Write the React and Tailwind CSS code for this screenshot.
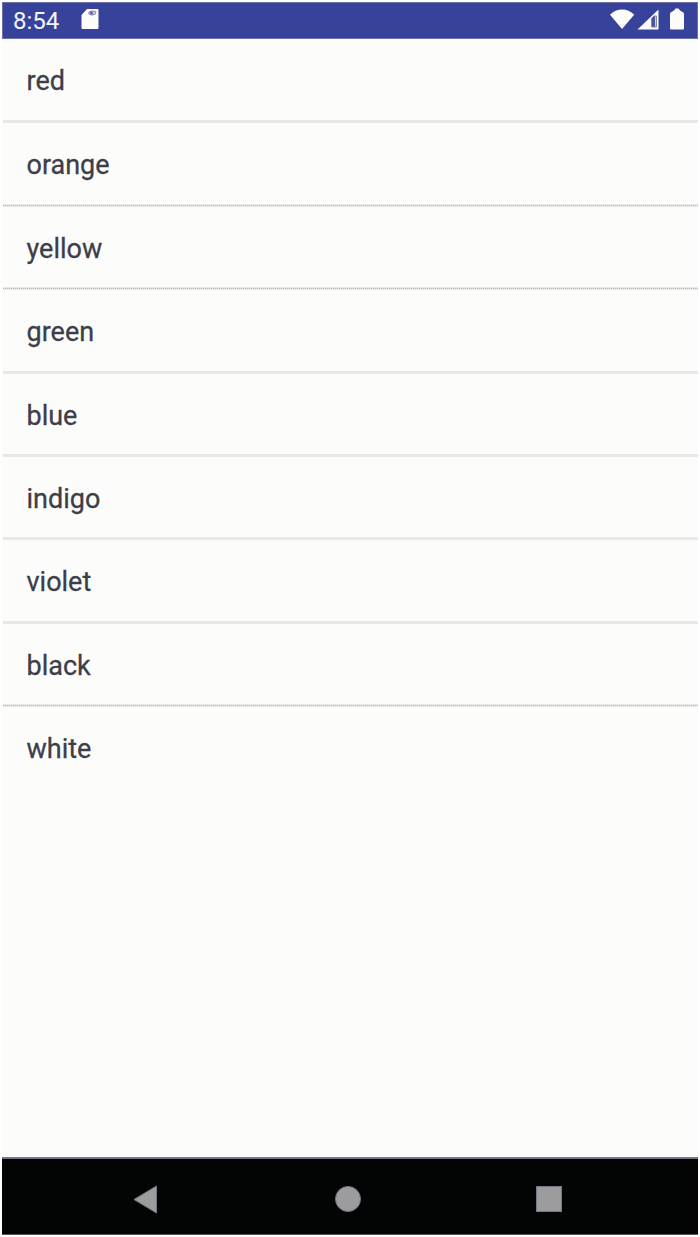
const rows = [
  { name: 'red', size: 'h-[84px]' },
  { name: 'orange', size: 'h-[84px]', dotted: true },
  { name: 'yellow', size: 'h-[83px]', dotted: true },
  { name: 'green', size: 'h-[84px]' },
  { name: 'blue', size: 'h-[83px]' },
  { name: 'indigo', size: 'h-[83px]' },
  { name: 'violet', size: 'h-[84px]' },
  { name: 'black', size: 'h-[83px]', dotted: true },
  { name: 'white', size: 'h-[81px]', last: true },
];

function Divider({ dotted }) {
  return (
    <div className="ml-px flex h-[3px] shrink-0 flex-col justify-center bg-[#e8e8e8]">
      {dotted && (
        <div className="h-px bg-[repeating-linear-gradient(90deg,#b8b8c0_0px,#b8b8c0_1px,#e4e4e6_1px,#e4e4e6_2px)]" />
      )}
    </div>
  );
}

function StatusBar() {
  return (
    <header className="flex h-[37px] shrink-0 items-center border border-[#6c70a4] bg-[#37439a] pb-[4px] pl-[10px] pr-[13px] text-white">
      <span className="w-[68px] pt-[4px] text-[24px] leading-none text-[#f4f4fa]">8:54</span>
      <svg className="h-[22px] w-[18px]" viewBox="0 0 18 22" aria-hidden="true">
        <path d="M6 1h10.500q1 0 1 1v17.500q0 1.500-1 1.500H1.500q-1 0-1-1.500V7z" fill="#fcfcfc" />
        <path d="M7.500 5.500q0-2.500 3.500-2.500t4 1q0 3-3.500 3t-4-1.500z" fill="#d0d0dc" stroke="#8588ae" />
        <circle cx="10.500" cy="5" r="1.500" fill="#5c60a0" />
      </svg>
      <div className="ml-auto flex items-center">
        <svg className="h-[22px] w-[26px]" viewBox="0 0 26 22" aria-hidden="true">
          <path d="M1 6.800C7.500-.3 18.500-.3 25.200 6.800L13 21z" fill="#fcfcfc" />
        </svg>
        <svg className="ml-[2px] h-[22px] w-[23px]" viewBox="0 0 23 22" aria-hidden="true">
          <path d="M.5 21.500L21.500 1.500v20z" fill="#fcfcfc" />
          <path d="M14.500 10.500L17 8h2.500v11h-5z" fill="#4c549c" stroke="#83869f" />
          <path d="M18.500 8.500v10" stroke="#cfcfdb" />
        </svg>
        <svg className="ml-[10px] h-[22px] w-[14px]" viewBox="0 0 14 22" aria-hidden="true">
          <path d="M5.500 .5h3l1.500 2 3 1.700Q14 5 14 6v14q0 1.500-1 1.500H1q-1 0-1-1.500V6q0-1 1-1.800l3-1.700z" fill="#fcfcfc" />
        </svg>
      </div>
    </header>
  );
}

function NavBar() {
  return (
    <nav className="flex h-[78px] shrink-0 items-center border-b border-t-2 border-b-[#555] border-t-[#77758c] bg-[#030504] pl-[131px] pt-[5px]">
      <svg className="h-[29px] w-[25px]" viewBox="0 0 25 29" aria-hidden="true">
        <path d="M1 14.500L23.500 1v27z" fill="#9c9c9e" stroke="#77778a" strokeLinejoin="round" />
      </svg>
      <span className="ml-[177px] size-[26px] rounded-full border border-[#77778a] bg-[#9c9c9e]" />
      <span className="ml-[175px] size-[26px] border border-[#77778a] bg-[#9c9c9e]" />
    </nav>
  );
}

export default function App() {
  return (
    <div className="flex h-[1237px] w-[700px] flex-col bg-white px-[2px] pb-[2px] pt-[2px] font-[Roboto,sans-serif]">
      <StatusBar />
      <main className="flex min-h-0 flex-1 flex-col bg-[#fcfdfb]">
        {rows.map((row) => (
          <div key={row.name} className={`${row.size} flex shrink-0 flex-col`}>
            <div className="flex flex-1 items-center pl-[24.500px] pt-[4px] text-[27px] leading-none text-[#3e3e4b] [-webkit-text-stroke:0.3px_#3e3e4b]">
              {row.name}
            </div>
            {!row.last && <Divider dotted={row.dotted} />}
          </div>
        ))}
      </main>
      <NavBar />
    </div>
  );
}
